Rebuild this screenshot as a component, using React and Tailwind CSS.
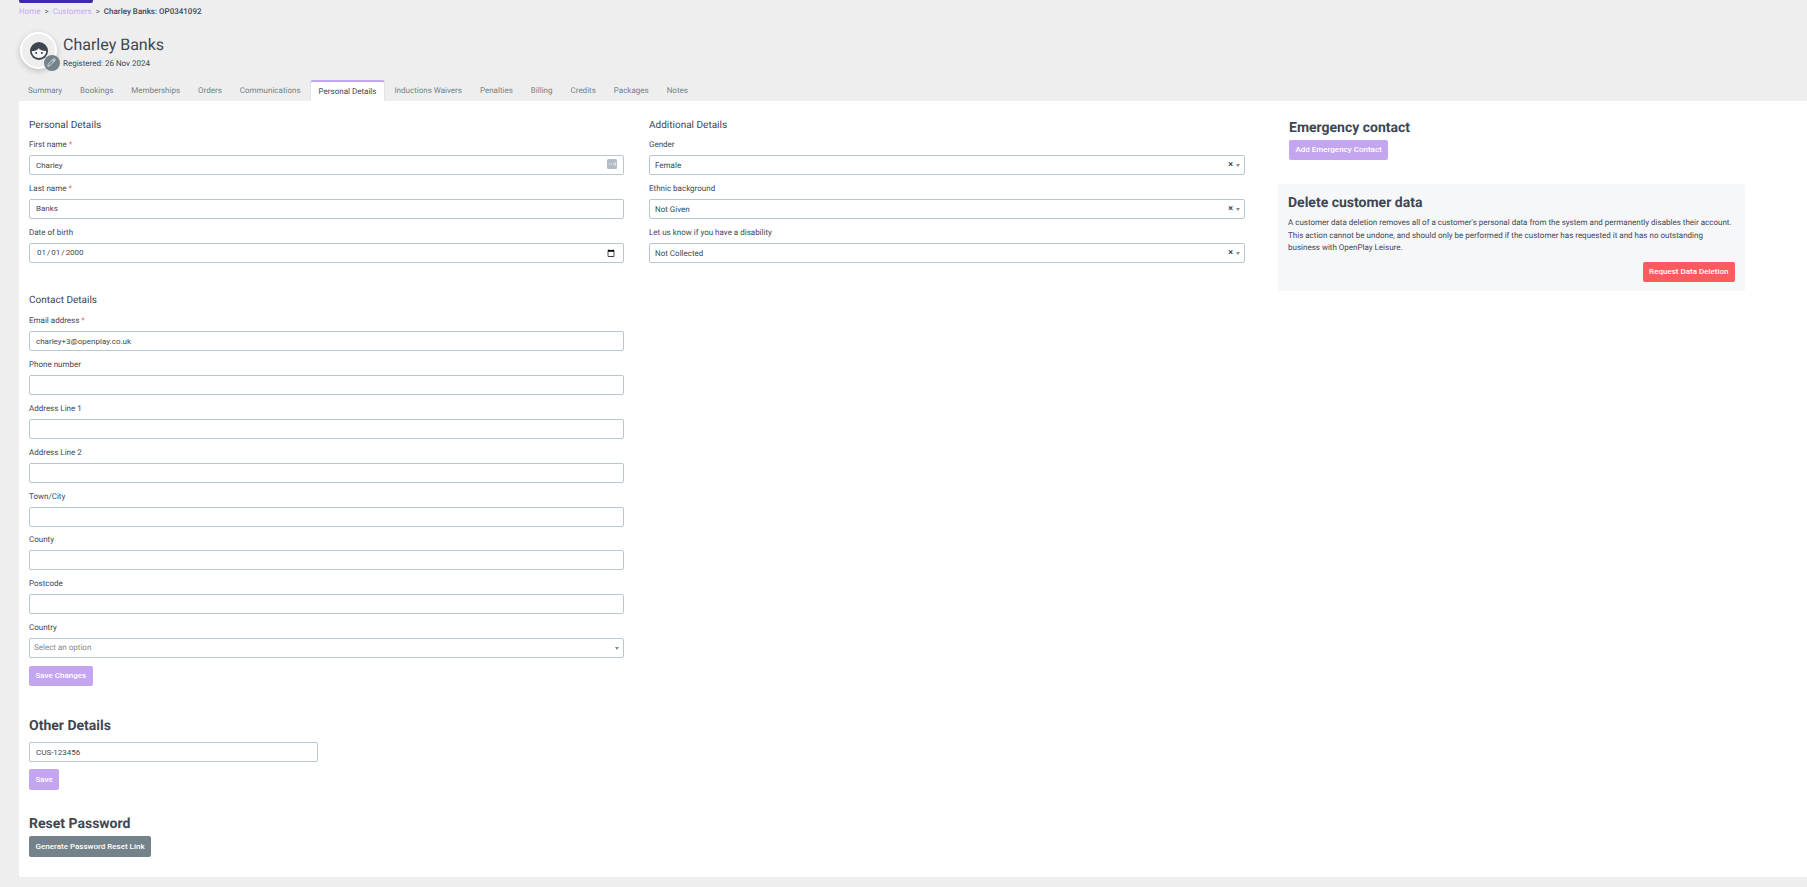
import { Pencil } from 'lucide-react';

const tabs = ['Summary', 'Bookings', 'Memberships', 'Orders', 'Communications', 'Personal Details', 'Inductions Waivers', 'Penalties', 'Billing', 'Credits', 'Packages', 'Notes'];

const contactFields = [
  { label: 'Email address', value: 'charley+3@openplay.co.uk', required: true },
  { label: 'Phone number' },
  { label: 'Address Line 1' },
  { label: 'Address Line 2' },
  { label: 'Town/City' },
  { label: 'County' },
  { label: 'Postcode' },
];

const Label = ({ children, required }) => (
  <label className="block h-[11px] leading-[11px] text-[8px] text-[#3e4751] mb-[5px]">
    {children}
    {required && <span className="text-[#ff5a5f]"> *</span>}
  </label>
);

const TextInput = ({ value = '', type = 'text', children }) => (
  <div className="relative">
    <input
      type={type}
      defaultValue={value}
      className="block w-full h-[20px] bg-white border border-[#b8c8d0] rounded-[2px] px-[6px] text-[8px] text-[#3e4751] outline-none"
    />
    {children}
  </div>
);

const Field = ({ label, required, value, type, children }) => (
  <div className="mb-[7.85px]">
    <Label required={required}>{label}</Label>
    <TextInput value={value} type={type}>{children}</TextInput>
  </div>
);

const Caret = () => <span className="w-0 h-0 border-x-[2.5px] border-x-transparent border-t-[3px] border-t-[#888]" />;

const SelectField = ({ label, value }) => (
  <div className="mb-[8px]">
    <Label>{label}</Label>
    <div className="flex items-center h-[20px] bg-white border border-[#b8c8d0] rounded-[2px] pl-[5px] pr-[4px] text-[8px] text-[#3e4751]">
      <span className="flex-1 pt-[1px]">{value}</span>
      <span className="text-[9px] font-bold leading-none mr-[3px]">×</span>
      <Caret />
    </div>
  </div>
);

const Button = ({ children, color, tall }) => (
  <button className={`block px-[6.5px] rounded-[2px] text-[8px] font-medium text-white whitespace-nowrap ${tall ? 'h-[21px]' : 'h-[20px]'} ${color}`}>
    {children}
  </button>
);

const App = () => {
  return (
    <div className="h-[887px] overflow-hidden bg-[#eeeeee] font-['Roboto',sans-serif] [text-rendering:geometricPrecision] text-[#3e4751] flex flex-col pl-[19px] pb-[10px]">
      <div className="w-[74px] h-[3px] bg-[#3f2aa8] rounded-b-[2px]" />

      {/* Breadcrumb */}
      <div className="flex items-center h-[12px] mt-[3px] text-[8px]">
        <span className="text-[#c8a8f8]">Home</span>
        <span className="mx-[4px]">&gt;</span>
        <span className="text-[#c8a8f8]">Customers</span>
        <span className="mx-[4px]">&gt;</span>
        <span className="font-medium">Charley Banks: OP0341092</span>
      </div>

      {/* Customer header */}
      <div className="flex mt-[14px] h-[45px]">
        <div className="relative w-[37px] h-[37px] ml-[1px] rounded-full border-[2.5px] border-white bg-[#eeeeee] shadow-[0_2px_6px_rgba(0,0,0,0.2)] flex items-center justify-center">
          <svg width="20" height="20" viewBox="0 0 20 20">
            <circle cx="10" cy="10" r="9" fill="#3e4751" />
            <path d="M2.800 10c2.700 0 5.400-.6 7-2.800 1.200 1.800 3.800 2.800 7.400 2.800-.1 4-3.200 7-7.200 7s-7.100-3-7.200-7z" fill="#f5f5f5" />
            <circle cx="7.200" cy="12" r="1" fill="#3e4751" />
            <circle cx="12.800" cy="12" r="1" fill="#3e4751" />
          </svg>
          <div className="absolute left-[21.500px] top-[20.500px] w-[16px] h-[16px] rounded-full bg-[#74828a] flex items-center justify-center">
            <Pencil size={9} className="text-white" />
          </div>
        </div>
        <div className="ml-[6px]">
          <div className="text-[16px] leading-[22px] mt-[2px]">Charley Banks</div>
          <div className="text-[8px] leading-[12px] mt-[2px]">Registered: 26 Nov 2024</div>
        </div>
      </div>

      {/* Tabs */}
      <div className="flex h-[21px] mt-[3px] text-[8px]">
        {tabs.map((tab) =>
          tab === 'Personal Details' ? (
            <div key={tab} className="flex items-center px-[8px] bg-white border-x border-[#e3e3e3] border-t-2 border-t-[#c4a6f0] rounded-t-[3px] text-[#3e4751]">
              {tab}
            </div>
          ) : (
            <div key={tab} className="flex items-center px-[9px] text-[#74828a]">{tab}</div>
          )
        )}
      </div>

      {/* Main card */}
      <div className="flex-1 bg-white rounded-l-[2px] pl-[10px] pt-[18px] flex">
        <div className="w-[595px] mr-[25px]">
          <h3 className="text-[10px] leading-[14px] mb-[6px]">Personal Details</h3>
          <Field label="First name" required value="Charley">
            <svg className="absolute right-[7px] top-[4px]" width="10" height="10" viewBox="0 0 10 10">
              <rect width="10" height="10" rx="1.500" fill="#b5bbc4" />
              <path d="M2 5h.8M4 5h.8M6 5h.8" stroke="#fff" strokeWidth="1" />
              <path d="M8 3v4" stroke="#fff" strokeWidth=".8" />
            </svg>
          </Field>
          <Field label="Last name" required value="Banks" />
          <Field label="Date of birth" type="date" value="2000-01-01" />

          <h3 className="text-[10px] leading-[14px] mt-[31.500px] mb-[7px]">Contact Details</h3>
          {contactFields.map((f) => (
            <Field key={f.label} label={f.label} required={f.required} value={f.value} />
          ))}
          <div className="mb-[8px]">
            <Label>Country</Label>
            <div className="flex items-center h-[20px] bg-white border border-[#b8c8d0] rounded-[2px] pl-[4px] pr-[4px] text-[8px] text-[#888]">
              <span className="flex-1">Select an option</span>
              <Caret />
            </div>
          </div>
          <Button color="bg-[#c4a6f0]">Save Changes</Button>

          <h2 className="text-[14px] leading-[18px] font-bold mt-[31px] mb-[7px]">Other Details</h2>
          <div className="w-[289px] mb-[7px]">
            <TextInput value="CUS-123456" />
          </div>
          <Button tall color="bg-[#c4a6f0]">Save</Button>

          <h2 className="text-[14px] leading-[18px] font-bold mt-[25px] mb-[3px]">Reset Password</h2>
          <Button tall color="bg-[#74828a]">Generate Password Reset Link</Button>
        </div>

        <div className="w-[596px] mr-[33px]">
          <h3 className="text-[10px] leading-[14px] mb-[6px]">Additional Details</h3>
          <SelectField label="Gender" value="Female" />
          <SelectField label="Ethnic background" value="Not Given" />
          <SelectField label="Let us know if you have a disability" value="Not Collected" />
        </div>

        <div className="w-[467px]">
          <div className="pl-[11px] mb-[24px]">
            <h2 className="text-[14px] leading-[18px] font-bold mb-[3px]">Emergency contact</h2>
            <Button color="bg-[#c4a6f0]">Add Emergency Contact</Button>
          </div>
          <div className="bg-[#f6f7f9] rounded-[2px] px-[10px] pt-[10px] pb-[9px]">
            <h2 className="text-[14px] leading-[18px] font-bold mb-[5px]">Delete customer data</h2>
            <p className="text-[8px] leading-[12.7px] mb-[7px]">
              A customer data deletion removes all of a customer's personal data from the system and permanently disables their account. This action cannot be undone, and should only be performed if the customer has requested it and has no outstanding business with OpenPlay Leisure.
            </p>
            <div className="flex justify-end">
              <Button color="bg-[#ff5a5f]">Request Data Deletion</Button>
            </div>
          </div>
        </div>
      </div>
    </div>
  );
};

export default App;
